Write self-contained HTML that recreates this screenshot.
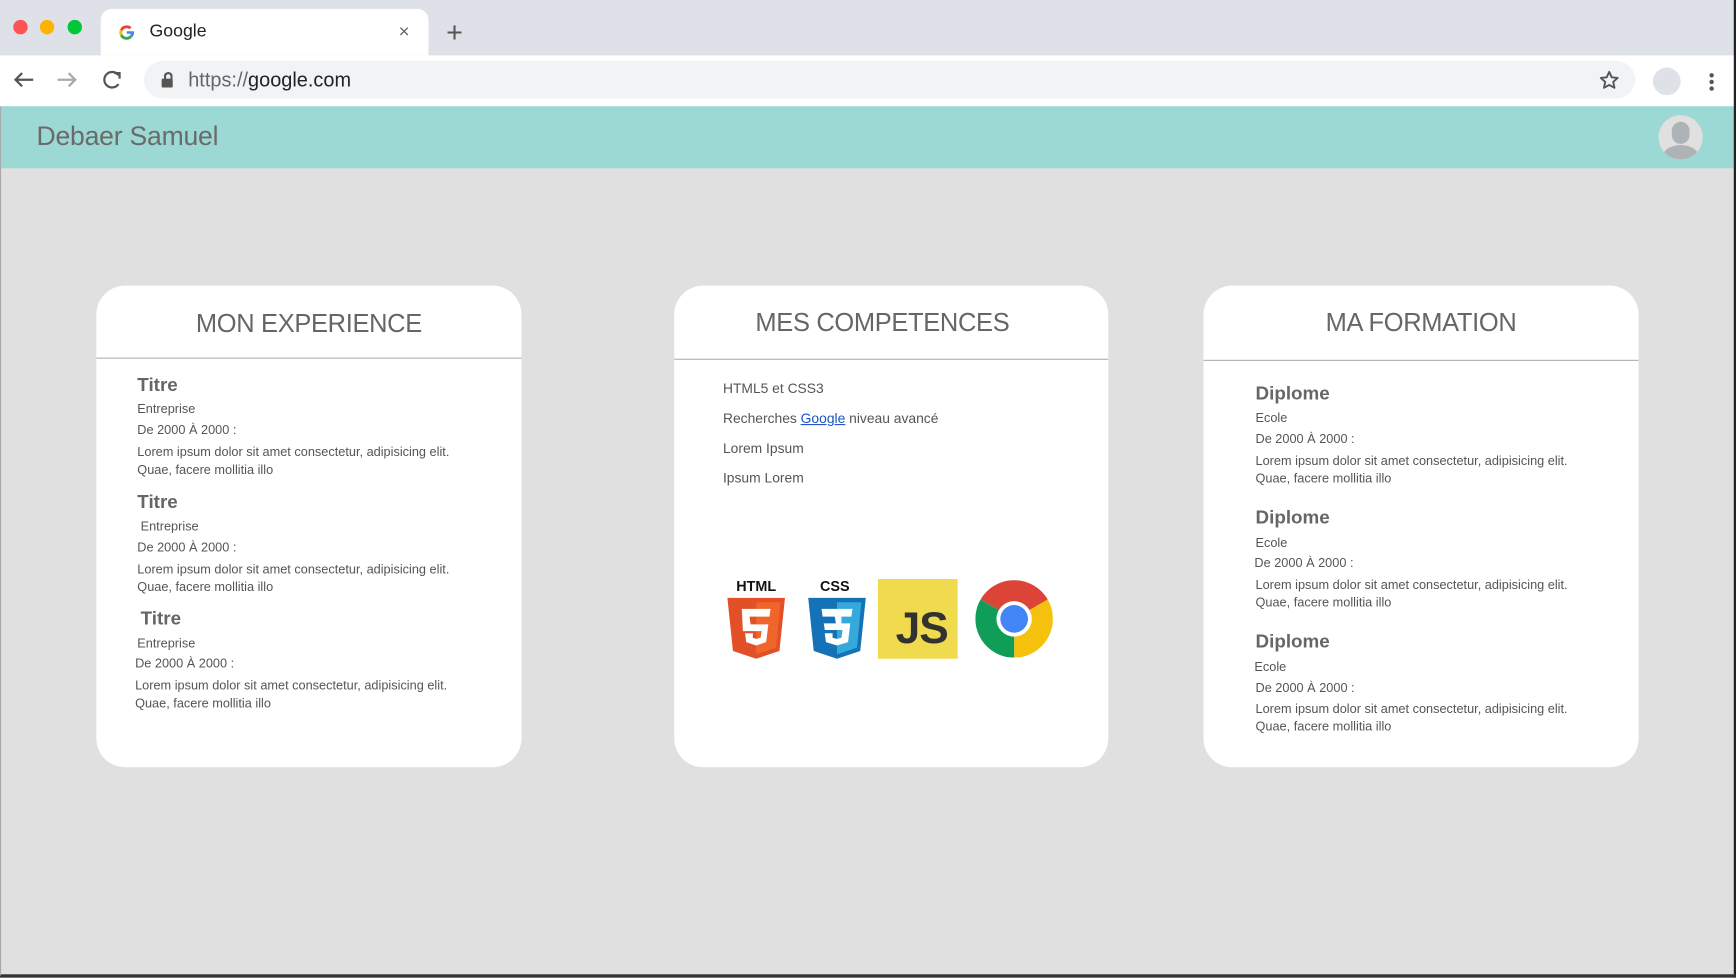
<!DOCTYPE html>
<html><head><meta charset="utf-8">
<style>
html,body{margin:0;padding:0;width:1736px;height:978px;overflow:hidden;background:#e0e0e0}
#w{position:absolute;left:0;top:0;width:1568px;height:883px;transform:scale(1.10714);transform-origin:0 0;font-family:"Liberation Sans",sans-serif;background:#e0e0e0}
.a{position:absolute;white-space:nowrap}
.card{position:absolute;background:#fff;border-radius:26px}
.card h2{margin:0;position:absolute;left:0;right:0;text-align:center;font-weight:normal;font-size:23px;color:#666;letter-spacing:-0.3px}
.card .hr{position:absolute;left:0;right:0;height:1px;background:#b0b0b0}
.t{font-size:17px;color:#666;font-weight:bold}
.s{font-size:11.5px;color:#555;margin-top:2px}
.li{font-size:12.5px;color:#555;margin-top:1px}
</style></head><body><div id="w">
<div class="a" style="left:0;top:0;width:1568px;height:50px;background:#dee1e7"></div>
<div class="a" style="left:12px;top:18px;width:13px;height:13px;border-radius:50%;background:#fd5353"></div>
<div class="a" style="left:36px;top:18px;width:13px;height:13px;border-radius:50%;background:#fdb400"></div>
<div class="a" style="left:61px;top:18px;width:13px;height:13px;border-radius:50%;background:#00c83a"></div>
<div class="a" style="left:91px;top:8px;width:296px;height:42px;background:#fff;border-radius:10px 10px 0 0"></div>
<svg class="a" style="left:107px;top:22px" width="15" height="15" viewBox="0 0 16 16">
<path d="M8 1a7 7 0 0 1 4.6 1.7l-2 2A4.2 4.2 0 0 0 3.9 6.5L1.6 4.8A7 7 0 0 1 8 1z" fill="#ea4335"/>
<path d="M1.6 4.8l2.3 1.7a4.2 4.2 0 0 0 0 3L1.6 11.2a7 7 0 0 1 0-6.4z" fill="#fbbc05"/>
<path d="M1.6 11.2l2.3-1.7A4.2 4.2 0 0 0 11 10.6l2.2 1.7A7 7 0 0 1 1.6 11.2z" fill="#34a853"/>
<path d="M15 8c0 1.8-.7 3.3-1.8 4.3L11 10.6c.5-.4.9-1 1-1.6H8V6.6h6.8c.1.4.2.9.2 1.4z" fill="#4285f4"/>
</svg>
<div class="a" style="left:135px;top:20px;font-size:16px;color:#222">Google</div>
<div class="a" style="left:360px;top:19px;font-size:17px;color:#666">×</div>
<div class="a" style="left:403px;top:14px;font-size:26px;color:#555">+</div>
<div class="a" style="left:0;top:50px;width:1568px;height:46px;background:#fff;border-bottom:1px solid #e4e4e4"></div>
<svg class="a" style="left:10px;top:62px" width="110" height="22" viewBox="0 0 110 22" fill="none" stroke-width="2">
<path d="M20 10H4M10 4L4 10l6 6" stroke="#555"/>
<path d="M42 10h16M52 4l6 6-6 6" stroke="#aaa"/>
<path d="M97 6a7 7 0 1 0 0 8" stroke="#555"/><path d="M93 4h5v5" stroke="#555"/>
</svg>
<div class="a" style="left:130px;top:55px;width:1347px;height:34px;background:#f1f3f4;border-radius:17px"></div>
<div class="a" style="left:146px;top:71px;width:10px;height:8px;background:#555;border-radius:1px"></div>
<div class="a" style="left:148px;top:65px;width:4px;height:6px;border:2px solid #555;border-bottom:none;border-radius:4px 4px 0 0"></div>
<div class="a" style="left:170px;top:62px;font-size:18px;color:#666">https://<span style="color:#222">google.com</span></div>
<svg class="a" style="left:1444px;top:63px" width="19" height="19" viewBox="0 0 20 20"><path d="M10 2l2.4 5.2 5.6.6-4.2 3.8 1.2 5.6L10 14.4 5 17.2l1.2-5.6L2 7.8l5.6-.6z" fill="none" stroke="#555" stroke-width="1.8" stroke-linejoin="round"/></svg>
<div class="a" style="left:1493px;top:61px;width:25px;height:25px;border-radius:50%;background:#dee1e7"></div>
<div class="a" style="left:1544px;top:66px;width:4px;height:4px;border-radius:50%;background:#555;box-shadow:0 6px 0 #555,0 12px 0 #555"></div>
<div class="a" style="left:0;top:96px;width:1568px;height:56px;background:#9dd9d4"></div>
<div class="a" style="left:33px;top:110px;font-size:24px;color:#6a6a6a;letter-spacing:-0.2px">Debaer Samuel</div>
<div class="a" style="left:1498px;top:104px;width:40px;height:40px;border-radius:50%;background:#e0e0e0;overflow:hidden">
<div style="position:absolute;left:12px;top:6px;width:16px;height:20px;border-radius:8px;background:#aeb3b6"></div>
<div style="position:absolute;left:4px;top:27px;width:32px;height:20px;border-radius:50%;background:#aeb3b6"></div></div>
<div class="a" style="left:1566px;top:0;width:2px;height:883px;background:#222"></div>
<div class="a" style="left:0;top:880px;width:1568px;height:3px;background:#333"></div>
<div class="a" style="left:0;top:96px;width:1px;height:785px;background:#aaa"></div>

<div class="card" style="left:87px;top:258px;width:384px;height:435px">
<h2 style="top:21px">MON EXPERIENCE</h2><div class="hr" style="top:65px"></div>
<div class="a t" style="left:37px;top:80px">Titre</div>
<div class="a s" style="left:37px;top:104px">Entreprise</div>
<div class="a s" style="left:37px;top:123px">De 2000 À 2000 :</div>
<div class="a s" style="left:37px;top:142px;line-height:15.5px">Lorem ipsum dolor sit amet consectetur, adipisicing elit.<br>Quae, facere mollitia illo</div>
<div class="a t" style="left:37px;top:186px">Titre</div>
<div class="a s" style="left:40px;top:210px">Entreprise</div>
<div class="a s" style="left:37px;top:229px">De 2000 À 2000 :</div>
<div class="a s" style="left:37px;top:248px;line-height:15.5px">Lorem ipsum dolor sit amet consectetur, adipisicing elit.<br>Quae, facere mollitia illo</div>
<div class="a t" style="left:40px;top:291px">Titre</div>
<div class="a s" style="left:37px;top:316px">Entreprise</div>
<div class="a s" style="left:35px;top:334px">De 2000 À 2000 :</div>
<div class="a s" style="left:35px;top:353px;line-height:15.5px">Lorem ipsum dolor sit amet consectetur, adipisicing elit.<br>Quae, facere mollitia illo</div>
</div>

<div class="card" style="left:609px;top:258px;width:392px;height:435px">
<h2 style="top:20px;padding-right:16px">MES COMPETENCES</h2><div class="hr" style="top:66px"></div>
<div class="a li" style="left:44px;top:85px">HTML5 et CSS3</div>
<div class="a li" style="left:44px;top:112px">Recherches <span style="color:#1a55c0;text-decoration:underline">Google</span> niveau avancé</div>
<div class="a li" style="left:44px;top:139px">Lorem Ipsum</div>
<div class="a li" style="left:44px;top:166px">Ipsum Lorem</div>
<svg class="a" style="left:46px;top:264px" width="56" height="74" viewBox="0 0 56 74">
<text x="28" y="12" text-anchor="middle" font-family="Liberation Sans" font-weight="bold" font-size="13" fill="#111">HTML</text>
<path d="M2 18h52l-5 48-21 7-21-7z" fill="#e34f26"/><path d="M28 22h22l-4 41-18 6z" fill="#ef652a"/>
<path d="M15 28h26l-1 7H22l1 7h16l-2 16-9 3-9-3-1-8h7l0 4 3 1 4-1 1-6H16z" fill="#fff"/>
</svg>
<svg class="a" style="left:119px;top:264px" width="56" height="74" viewBox="0 0 56 74">
<text x="26" y="12" text-anchor="middle" font-family="Liberation Sans" font-weight="bold" font-size="13" fill="#111">CSS</text>
<path d="M2 18h52l-5 48-21 7-21-7z" fill="#1572b6"/><path d="M28 22h22l-4 41-18 6z" fill="#33a9dc"/>
<path d="M14 28h28l-1 7H26l1 6h13l-2 17-10 3-10-3-1-8h7l0 4 4 1 4-1 1-7H17l-1-6h16l0-6H15z" fill="#fff"/>
</svg>
<div class="a" style="left:184px;top:265px;width:72px;height:72px;background:#f0db4f"></div>
<div class="a" style="left:200px;top:288px;font-size:40px;font-weight:bold;color:#323330;letter-spacing:-1px">JS</div>
<svg class="a" style="left:272px;top:266px" width="70" height="70" viewBox="-35 -35 70 70">
<path d="M0 0L-30.3-17.5A35 35 0 0 1 30.3-17.5Z" fill="#db4437"/>
<path d="M0 0L30.3-17.5A35 35 0 0 1 0 35Z" fill="#f4c20d"/>
<path d="M0 0L0 35A35 35 0 0 1-30.3-17.5Z" fill="#0f9d58"/>
<circle r="16" fill="#fff"/><circle r="12.5" fill="#4285f4"/>
</svg>
</div>

<div class="card" style="left:1087px;top:258px;width:393px;height:435px">
<h2 style="top:20px">MA FORMATION</h2><div class="hr" style="top:67px"></div>
<div class="a t" style="left:47px;top:88px">Diplome</div>
<div class="a s" style="left:47px;top:112px">Ecole</div>
<div class="a s" style="left:47px;top:131px">De 2000 À 2000 :</div>
<div class="a s" style="left:47px;top:150px;line-height:15.5px">Lorem ipsum dolor sit amet consectetur, adipisicing elit.<br>Quae, facere mollitia illo</div>
<div class="a t" style="left:47px;top:200px">Diplome</div>
<div class="a s" style="left:47px;top:225px">Ecole</div>
<div class="a s" style="left:46px;top:243px">De 2000 À 2000 :</div>
<div class="a s" style="left:47px;top:262px;line-height:15.5px">Lorem ipsum dolor sit amet consectetur, adipisicing elit.<br>Quae, facere mollitia illo</div>
<div class="a t" style="left:47px;top:312px">Diplome</div>
<div class="a s" style="left:46px;top:337px">Ecole</div>
<div class="a s" style="left:47px;top:356px">De 2000 À 2000 :</div>
<div class="a s" style="left:47px;top:374px;line-height:15.5px">Lorem ipsum dolor sit amet consectetur, adipisicing elit.<br>Quae, facere mollitia illo</div>
</div>
</div></body></html>
